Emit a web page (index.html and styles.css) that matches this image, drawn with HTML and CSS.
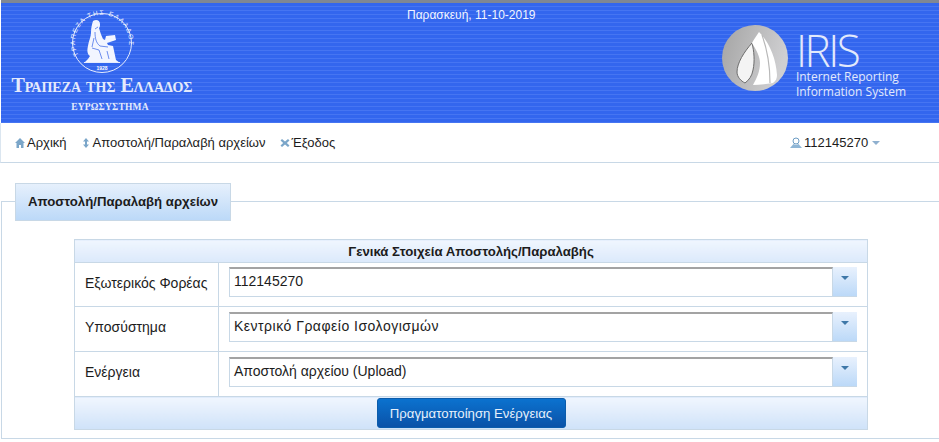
FILE: index.html
```html
<!DOCTYPE html>
<html lang="en">

<head>
  <meta charset="UTF-8">
  <title>IRIS - Αποστολή/Παραλαβή αρχείων</title>
  <link rel="stylesheet" href="styles.css">
</head>

<body>
  <div class="header">
    <div class="bank">
      <svg class="seal" width="62" height="62" viewBox="0 0 62 62">
        <defs>
          <path id="sealArc" d="M8 44A27 27 0 1 1 54 44"></path>
        </defs>
        <circle cx="31" cy="31" r="29.500" fill="none" stroke="#e6ecfd" stroke-width="1"></circle>
        <text class="seal-text"><textPath href="#sealArc" startOffset="1">ΤΡΑΠΕΖΑ ΤΗΣ ΕΛΛΑΔΟΣ</textPath></text>
        <path fill="#f2f5ff" d="M22 9c3-2 7-1 7 3 0 2 0 3-1 4 1 3 2 7 4 11l2 1 1-4 9-1 1 5-9 3 1 2 5 1 3 14 4 3H13l4-4 2-3c-3-2-3-6-2-10 1-6 3-9 3-14 0-4 1-8 2-11z"></path>
        <path fill="none" stroke="#4a72ea" stroke-width="0.800" d="M24 20c0 6 1 11 5 14l8 1M21 36l7 2 3 9M36 39l2 8M27 15l-3 2M23 26l-2 9"></path>
        <rect x="13" y="50" width="36" height="1" fill="#e6ecfd"></rect>
        <text class="seal-year" x="31" y="58" text-anchor="middle">1928</text>
      </svg>
      <div class="bank-name">Τραπεζα της Ελλαδος</div>
      <div class="bank-sub">ΕΥΡΩΣΥΣΤΗΜΑ</div>
    </div>
    <div class="date">Παρασκευή, 11-10-2019</div>
    <div class="iris">
      <svg class="iris-logo" width="66" height="66" viewBox="0 0 66 66">
        <defs>
          <linearGradient id="disc" x1="0" y1="0" x2="1" y2="0.3">
            <stop offset="0" stop-color="#a4a4a4"></stop>
            <stop offset="1" stop-color="#cfcfd1"></stop>
          </linearGradient>
        </defs>
        <circle cx="33" cy="33" r="33" fill="url(#disc)"></circle>
        <path fill="#f4f4f4" stroke="#6d6d6d" stroke-width="1" d="M30 18C22 27 15 38 15 47c0 5 4 9 8 11 4-3 7-7 8-13 2-9 1-19-1-27z"></path>
        <path fill="#ffffff" d="M37 7c-2 3-5 7-7 11 5 8 8 14 8 20 0 8-3 15-7 22 7 0 14-1 20-2 3-2 4-5 4-8C54 33 47 17 37 7z"></path>
        <path fill="none" stroke="#b8b8b8" stroke-width="1.200" d="M40 10c5 14 8 30 8 48"></path>
      </svg>
      <div class="iris-text">
        <div class="iris-title">IRIS</div>
        <div class="iris-line">Internet Reporting</div>
        <div class="iris-line">Information System</div>
      </div>
    </div>
  </div>

  <div class="menu">
    <a class="menu-item">
      <svg class="menu-icon" width="10" height="10" viewBox="0 0 10 10">
        <path fill="#7ba6c9" d="M5 0l5 5H8.500v5H6V7H4v3H1.500V5H0z"></path>
      </svg>Αρχική
    </a>
    <a class="menu-item">
      <svg class="menu-icon" width="10" height="10" viewBox="0 0 10 10">
        <path fill="#7ba6c9" d="M5 0l3 3.500H6v3h2l-3 3.500-3-3.500h2v-3H2z"></path>
      </svg>Αποστολή/Παραλαβή αρχείων
    </a>
    <a class="menu-item">
      <svg class="menu-icon" width="10" height="10" viewBox="0 0 10 10">
        <path fill="#7ba6c9" d="M2 1l3 2.500L8 1l1.500 1.500L6.800 5l2.700 2.500L8 9 5 6.500 2 9 .5 7.500 3.200 5 .5 2.500z"></path>
      </svg>Έξοδος
    </a>
    <a class="menu-user">
      <svg class="user-icon" width="12" height="12" viewBox="0 0 12 12">
        <path fill="none" stroke="#6c9cc4" d="M6 1a2.500 2.500 0 0 1 0 6 2.500 2.500 0 0 1 0-6z"></path>
        <path fill="#8fb6d6" d="M3.500 7L0 11h12L8.500 7 6 8z"></path>
      </svg>112145270<span class="user-caret"></span>
    </a>
  </div>

  <div class="panel">
    <h2 class="panel-tab">Αποστολή/Παραλαβή αρχείων</h2>
    <table class="form-table">
      <colgroup>
        <col class="label-col">
        <col>
      </colgroup>
      <tr>
        <th class="form-title" colspan="2">Γενικά Στοιχεία Αποστολής/Παραλαβής</th>
      </tr>
      <tr class="first-row">
        <td class="form-label">Εξωτερικός Φορέας</td>
        <td class="form-field">
          <div class="combo">
            <span class="combo-value">112145270</span>
            <span class="combo-arrow"></span>
          </div>
        </td>
      </tr>
      <tr>
        <td class="form-label">Υποσύστημα</td>
        <td class="form-field">
          <div class="combo">
            <span class="combo-value combo-value-wide">Κεντρικό Γραφείο Ισολογισμών</span>
            <span class="combo-arrow"></span>
          </div>
        </td>
      </tr>
      <tr>
        <td class="form-label">Ενέργεια</td>
        <td class="form-field">
          <div class="combo">
            <span class="combo-value">Αποστολή αρχείου (Upload)</span>
            <span class="combo-arrow"></span>
          </div>
        </td>
      </tr>
      <tr>
        <td class="form-actions" colspan="2">
          <button class="action-button">Πραγματοποίηση Ενέργειας</button>
        </td>
      </tr>
    </table>
  </div>
</body>

</html>
```

FILE: styles.css
```css
html,
body {
  height: 100%;
}

body {
  margin: 0;
  background-color: #ffffff;
  color: #1c1c1c;
  font-family: "Liberation Sans", Arial, sans-serif;
  font-size: 14px;
  overflow: hidden;
}

.header {
  height: 120px;
  display: flex;
  justify-content: space-between;
  margin-left: 1px;
  border-top: 3px solid #7f8794;
  background-color: #3568f0;
  background-image: repeating-linear-gradient(180deg, #3366ee 0, #3366ee 3px, #4675f2 3px, #4675f2 4px);
  position: relative;
}

.bank {
  width: 192px;
  margin-left: 5px;
  display: flex;
  flex-direction: column;
  align-items: center;
  color: #e4eafc;
  font-family: "Liberation Serif", serif;
  font-weight: bold;
}

.seal {
  margin-top: 9px;
  overflow: visible;
}

.seal-text {
  font-family: "Liberation Sans", sans-serif;
  font-size: 6.500px;
  font-weight: normal;
  letter-spacing: 1.400px;
  fill: #eef2fe;
}

.seal-year {
  font-family: "Liberation Sans", sans-serif;
  font-size: 5px;
  fill: #ffffff;
}

.bank-name {
  margin-top: 2px;
  font-size: 20px;
  line-height: 19px;
  font-variant: small-caps;
  white-space: nowrap;
}

.bank-sub {
  margin-top: 6px;
  margin-left: 16px;
  font-size: 9.500px;
  line-height: 12px;
  letter-spacing: 0.200px;
}

.date {
  position: absolute;
  top: 4px;
  left: 406px;
  color: #f2f5ff;
  font-size: 12px;
  line-height: 16px;
}

.iris {
  display: flex;
  margin: 22px 33px 0 0;
}

.iris-text {
  margin-left: 8px;
  color: #e2e9fc;
  font-family: "Open Sans", sans-serif;
}

.iris-title {
  font-size: 44px;
  font-weight: 300;
  line-height: 38px;
  margin-top: 6px;
  letter-spacing: -2.500px;
}

.iris-line {
  font-size: 12px;
  line-height: 15px;
  white-space: nowrap;
}

.menu {
  height: 39px;
  display: flex;
  align-items: center;
  padding-left: 14px;
  border-bottom: 1px solid #c8d8e6;
  border-left: 1px solid #dbe6f0;
  font-size: 13px;
}

.menu-item {
  margin-right: 14px;
  white-space: nowrap;
}

.menu-icon {
  margin-right: 2px;
  vertical-align: -1px;
}

.menu-user {
  position: absolute;
  left: 790px;
  top: 135px;
  white-space: nowrap;
}

.user-icon {
  margin-right: 2px;
  vertical-align: -2px;
}

.user-caret {
  display: inline-block;
  margin-left: 4px;
  vertical-align: 2px;
  border-style: solid;
  border-width: 4px 4px 0;
  border-color: #8fb0cf transparent transparent;
}

.panel {
  margin: 38px 0 0 1px;
  height: 238px;
  box-sizing: border-box;
  border: 1px solid #c8d8e6;
  border-right: 0;
  position: relative;
}

.panel-tab {
  position: absolute;
  top: -19px;
  left: 13px;
  width: 216px;
  height: 38px;
  box-sizing: border-box;
  margin: 0;
  border: 1px solid #c8d8e6;
  background: linear-gradient(#e6f0fc, #bcd9f8);
  font-size: 13.200px;
  line-height: 35px;
  text-align: center;
}

.form-table {
  position: absolute;
  top: 37px;
  left: 72px;
  width: 794px;
  border-collapse: collapse;
  table-layout: fixed;
}

.label-col {
  width: 144px;
}

.form-table td,
.form-table th {
  border: 1px solid #c8d8e6;
  padding: 0;
}

.form-title {
  height: 22px;
  background: linear-gradient(#f0f6fe, #dbe9fb);
  font-size: 13.200px;
  font-weight: bold;
}

.form-table .form-label {
  height: 40px;
  padding: 0 0 4px 10px;
  font-size: 14px;
}

.form-table .first-row .form-label {
  height: 39px;
}

.form-table .form-field {
  padding: 5px 10px 0;
  vertical-align: top;
}

.form-table .first-row .form-field {
  padding-top: 4px;
}

.combo {
  display: flex;
  height: 30px;
}

.combo-value {
  flex: 1;
  box-sizing: border-box;
  padding-left: 4px;
  border: 1px solid #c8d8e6;
  border-top: 2px solid #a3a3a3;
  font-size: 14px;
  line-height: 25px;
}

.combo-value-wide {
  letter-spacing: 0.500px;
}

.combo-arrow {
  width: 24px;
  position: relative;
  background: linear-gradient(#e8f1fd, #bcd9f8);
  border-bottom: 1px solid #c8d8e6;
  box-sizing: border-box;
}

.combo-arrow::after {
  content: "";
  position: absolute;
  top: 9px;
  left: 8px;
  border-style: solid;
  border-width: 4px 4px 0;
  border-color: #3f78a8 transparent transparent;
}

.form-actions {
  height: 32px;
  text-align: center;
  background: linear-gradient(#f0f6fe, #cfe2f9);
}

.action-button {
  width: 189px;
  height: 30px;
  border: 1px solid #0b5cab;
  border-radius: 3px;
  background: linear-gradient(#0b72cf, #0a52a8);
  color: #e6f0fb;
  font-family: "Liberation Sans", Arial, sans-serif;
  font-size: 13.200px;
  vertical-align: middle;
}
```
